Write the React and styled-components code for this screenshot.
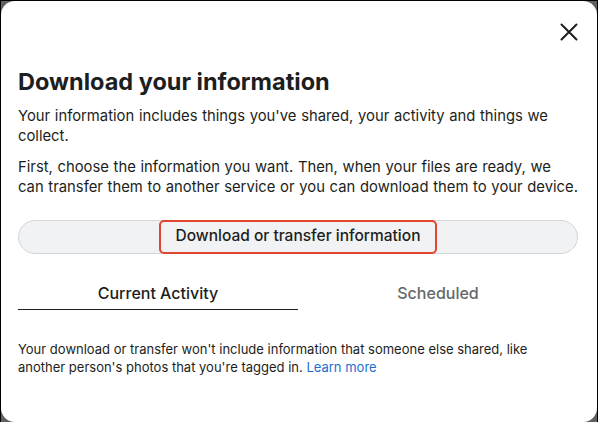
import React from "react";
import styled, { createGlobalStyle } from "styled-components";

const Global = createGlobalStyle`
  html, body { margin: 0; padding: 0; }
  body {
    font-family: Inter, "Open Sans", sans-serif;
    color: #1c1e21;
    -webkit-font-smoothing: antialiased;
  }
`;

const Backdrop = styled.div`
  width: 598px;
  height: 422px;
  box-sizing: border-box;
  background: #606060;
  border: 1px solid #000;
  border-bottom: none;
  display: flex;
`;

const Dialog = styled.div`
  flex: 1;
  background: #fff;
  border-radius: 14px;
  padding: 19px 19px 0 17px;
  display: flex;
  flex-direction: column;
`;

const TopBar = styled.div`
  display: flex;
  justify-content: flex-end;
  height: 24px;
`;

const CloseButton = styled.button`
  width: 24px;
  height: 24px;
  border: none;
  background: none;
  padding: 0;
  margin-right: -3px;
  cursor: pointer;
  color: #1c1e21;
`;

const Title = styled.h1`
  margin: 24px 0 0;
  font-size: 23.5px;
  font-weight: 700;
  line-height: 28px;
  color: #1c1e21;
`;

const Text = styled.p`
  margin: ${(p) => p.$mt || "10px"} 0 0;
  font-size: 14.8px;
  word-spacing: 0.55px;
  line-height: 20px;
  color: #1c1e21;
`;

const WideButton = styled.button`
  margin-top: 23px;
  height: 34px;
  border-radius: 17px;
  border: 1px solid #d3d5d8;
  background: #f1f2f4;
  display: flex;
  align-items: center;
  justify-content: center;
  font-family: inherit;
  cursor: pointer;
  padding: 0;
`;

const ButtonLabel = styled.span`
  font-size: 15.5px;
  font-weight: 500;
  line-height: 20px;
  color: #1c1e21;
  padding: 4px 15px 6px;
  border: 2px solid #e04530;
  border-radius: 5px;
`;

const Tabs = styled.div`
  margin-top: 29px;
  display: grid;
  grid-template-columns: 1fr 1fr;
`;

const Tab = styled.div`
  text-align: center;
  font-size: 16px;
  font-weight: 500;
  line-height: 20px;
  padding-bottom: 6px;
  color: ${(p) => (p.$active ? "#1c1e21" : "#65676b")};
  border-bottom: 1.5px solid ${(p) => (p.$active ? "#1c1e21" : "transparent")};
`;

const Note = styled.p`
  margin: 30px 0 0;
  font-size: 13px;
  line-height: 18px;
  color: #1c1e21;
`;

const Link = styled.a`
  color: #1d6ecf;
  text-decoration: none;
`;

export default function App() {
  return (
    <>
      <Global />
      <Backdrop>
        <Dialog>
          <TopBar>
            <CloseButton aria-label="Close">
              <svg width="24" height="24" viewBox="0 0 24 24" fill="none" stroke="currentColor" strokeWidth="2" strokeLinecap="round">
                <path d="M4.5 4.5l15 15M19.5 4.5l-15 15" />
              </svg>
            </CloseButton>
          </TopBar>
          <Title>Download your information</Title>
          <Text>Your information includes things you've shared, your activity and things we collect.</Text>
          <Text $mt="11px">
            First, choose the information you want. Then, when your files are ready, we can transfer them to another service or you can download them to your device.
          </Text>
          <WideButton>
            <ButtonLabel>Download or transfer information</ButtonLabel>
          </WideButton>
          <Tabs>
            <Tab $active>Current Activity</Tab>
            <Tab>Scheduled</Tab>
          </Tabs>
          <Note>
            Your download or transfer won't include information that someone else shared, like another person's photos that you're tagged in. <Link href="#">Learn more</Link>
          </Note>
        </Dialog>
      </Backdrop>
    </>
  );
}
